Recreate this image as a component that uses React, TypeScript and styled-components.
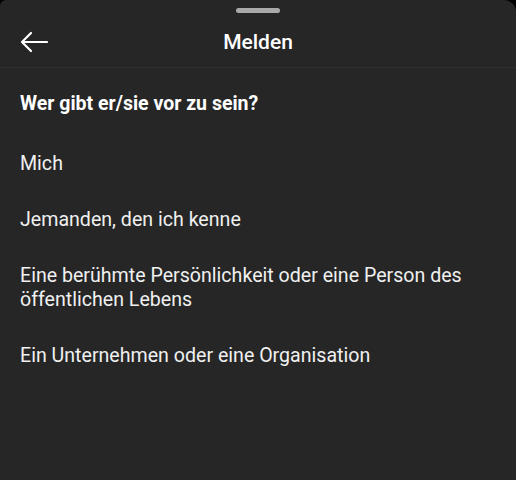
import React from "react";
import styled, { createGlobalStyle } from "styled-components";

const Global = createGlobalStyle`
  html, body { margin: 0; padding: 0; background: #000; }
  body { font-family: Roboto, "Noto Sans", Arial, sans-serif; -webkit-font-smoothing: antialiased; }
`;

const Sheet = styled.div`
  width: 516px;
  height: 480px;
  background: #262626;
  border-radius: 6px 12px 0 0;
  display: flex;
  flex-direction: column;
  color: #f2f2f2;
  overflow: hidden;
`;

const HandleRow = styled.div`
  display: flex;
  justify-content: center;
  padding-top: 8px;
`;

const Handle = styled.div`
  width: 44px;
  height: 5px;
  border-radius: 3px;
  background: #a9a9a9;
`;

const Header = styled.div`
  height: 50px;
  padding-top: 4px;
  display: grid;
  grid-template-columns: 60px 1fr 60px;
  align-items: center;
  border-bottom: 1px solid #303030;
`;

const BackButton = styled.button`
  background: none;
  border: 0;
  padding: 0 0 0 20px;
  display: flex;
  align-items: center;
  color: #fff;
  cursor: pointer;
`;

const Title = styled.h1`
  margin: 0;
  text-align: center;
  font-size: 21px;
  font-weight: 500;
  color: #fff;
`;

const Question = styled.h2`
  margin: 0;
  padding: 24px 20px 20px;
  font-size: 19.5px;
  font-weight: 700;
  color: #fff;
  line-height: 24px;
`;

const List = styled.ul`
  list-style: none;
  margin: 0;
  padding: 0;
`;

const Item = styled.li`
  padding: 16px 20px;
  font-size: 19.6px;
  line-height: 24px;
  color: #f0f0f0;
  cursor: pointer;
`;

const options = [
  "Mich",
  "Jemanden, den ich kenne",
  "Eine berühmte Persönlichkeit oder eine Person des öffentlichen Lebens",
  "Ein Unternehmen oder eine Organisation",
];

export default function App() {
  return (
    <>
      <Global />
      <Sheet>
        <HandleRow>
          <Handle />
        </HandleRow>
        <Header>
          <BackButton aria-label="Zurück">
            <svg width="28" height="22" viewBox="0 0 28 22" fill="none" stroke="#fff" strokeWidth="2.2" strokeLinecap="round" strokeLinejoin="round">
              <path d="M27 11H2M11 2L2 11l9 9" />
            </svg>
          </BackButton>
          <Title>Melden</Title>
          <div />
        </Header>
        <Question>Wer gibt er/sie vor zu sein?</Question>
        <List>
          {options.map((o) => (
            <Item key={o}>{o}</Item>
          ))}
        </List>
      </Sheet>
    </>
  );
}
